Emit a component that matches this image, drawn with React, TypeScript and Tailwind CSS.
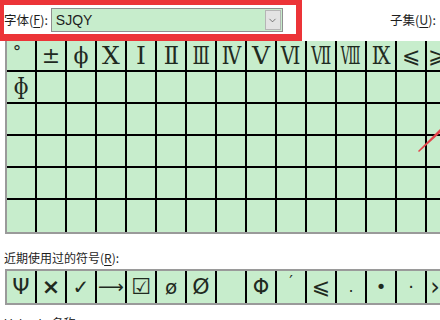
import { ChevronDown } from "lucide-react";

type Sym = { ch: string; cls?: string };

const TOP_ROW: Sym[] = [
  { ch: "°", cls: "text-[17px] -translate-y-[4px] -translate-x-[4px]" },
  { ch: "±", cls: "text-[22px]" },
  { ch: "ϕ", cls: "text-[22px]" },
  { ch: "Ⅹ", cls: "text-[25px] font-['Liberation_Serif','DejaVu_Serif',serif]" },
  { ch: "Ⅰ", cls: "text-[25px]" },
  { ch: "Ⅱ", cls: "text-[25px] scale-x-90" },
  { ch: "Ⅲ", cls: "text-[25px] scale-x-[0.72]" },
  { ch: "Ⅳ", cls: "text-[25px] scale-x-[0.78]" },
  { ch: "Ⅴ", cls: "text-[25px]" },
  { ch: "Ⅵ", cls: "text-[25px] scale-x-[0.78]" },
  { ch: "Ⅶ", cls: "text-[25px] scale-x-[0.62]" },
  { ch: "Ⅷ", cls: "text-[25px] scale-x-[0.5]" },
  { ch: "Ⅸ", cls: "text-[25px] scale-x-[0.78]" },
  { ch: "⩽", cls: "text-[22px]" },
  { ch: "⩾", cls: "text-[22px] -translate-x-[5px]" },
];
const SECOND_ROW: Sym[] = [{ ch: "ɸ", cls: "text-[22px]" }];
const RECENT: Sym[] = [
  { ch: "Ψ", cls: "text-[22px]" },
  { ch: "×", cls: "text-[22px] font-bold" },
  { ch: "✓", cls: "text-[20px]" },
  { ch: "⟶", cls: "text-[18px]" },
  { ch: "☑", cls: "text-[22px]" },
  { ch: "ø", cls: "text-[20px]" },
  { ch: "Ø", cls: "text-[22px]" },
  { ch: "" },
  { ch: "Φ", cls: "text-[21px]" },
  { ch: "′", cls: "text-[16px] -translate-y-[5px]" },
  { ch: "⩽", cls: "text-[22px]" },
  { ch: ".", cls: "text-[16px]" },
  { ch: "•", cls: "text-[18px]" },
  { ch: "·", cls: "text-[18px]" },
  { ch: "›", cls: "text-[24px] -translate-x-[7px]" },
];

const CJK = "font-['Microsoft_YaHei','Noto_Sans_CJK_SC',sans-serif]";

function Key({ k }: { k: string }) {
  return (
    <>
      (<span className="underline underline-offset-2">{k}</span>):
    </>
  );
}

function Cell({ sym, last, bottom, serif }: { sym?: Sym; last: boolean; bottom: boolean; serif: boolean }) {
  return (
    <div
      className={`flex h-full w-[30px] shrink-0 items-center justify-center overflow-hidden border-black ${
        last ? "" : "border-r-2"
      } ${bottom ? "border-b-2" : ""} ${
        serif ? "font-['DejaVu_Serif','Liberation_Serif',serif]" : "font-['DejaVu_Sans','Liberation_Sans',sans-serif]"
      } leading-none text-[#1f2a1f]`}
    >
      {sym && <span className={`inline-block ${sym.cls ?? ""}`}>{sym.ch}</span>}
    </div>
  );
}

export default function App() {
  const rows: Sym[][] = [TOP_ROW, SECOND_ROW, [], [], [], []];

  return (
    <div className={`relative h-[320px] w-[440px] overflow-hidden bg-white ${CJK} text-[12px] text-[#1e1e1e]`}>
      {/* Font / subset row */}
      <div className="flex h-[41px] items-center pb-[1px]">
        <span className="ml-[4px] whitespace-nowrap text-[12.5px]">
          字体<Key k="F" />
        </span>
        <div className="ml-[3px] flex h-[24px] w-[232px] items-stretch border border-[#8f8f8f] bg-[#c7edcc]">
          <span className="flex flex-1 items-center pl-[4px] font-['Liberation_Sans',sans-serif] text-[14px]">SJQY</span>
          <span className="m-[1px] flex w-[16px] items-center justify-center border border-[#b5b5b5] bg-[#e3e3e3]">
            <ChevronDown size={11} strokeWidth={1.5} className="text-[#444]" />
          </span>
        </div>
        <span className="ml-auto mr-[4px] whitespace-nowrap text-[12.5px]">
          子集<Key k="U" />
        </span>
      </div>

      {/* Symbol grid */}
      <div className="ml-[5px] flex flex-col border-b-2 border-l-2 border-[#9a9a9a] bg-[#c7edcc]">
        {rows.map((row, r) => (
          <div key={r} className={`flex ${r === 0 ? "h-[31px]" : "h-[32px]"}`}>
            {Array.from({ length: 15 }).map((_, c) => (
              <Cell key={c} sym={row[c]} last={c === 14} bottom={r !== 5} serif />
            ))}
          </div>
        ))}
      </div>

      {/* Recently used */}
      <div className="ml-[4px] mt-[15px] leading-[18px]">
        近期使用过的符号<Key k="R" />
      </div>
      <div className="ml-[5px] mt-[2px] flex h-[36px] border-y-2 border-l-2 border-[#9a9a9a] bg-[#c7edcc]">
        {RECENT.map((sym, i) => (
          <Cell key={i} sym={sym} last={i === 14} bottom={false} serif={false} />
        ))}
      </div>

      <div className="ml-[4px] mt-[9px] whitespace-nowrap">
        <span className="font-['Liberation_Sans',sans-serif]">Unicode </span>名称:
      </div>

      {/* Annotation overlays */}
      <div className="pointer-events-none absolute left-0 top-0 h-[41px] w-[302px] border-y-[5px] border-b-[7px] border-l-[4px] border-r-[6px] border-[#ec3438]" />
      <svg className="pointer-events-none absolute left-[410px] top-[120px]" width="30" height="40" viewBox="0 0 30 40">
        <polygon points="8,31 30,9 30,13 9,32" fill="#e3454a" />
      </svg>
    </div>
  );
}
